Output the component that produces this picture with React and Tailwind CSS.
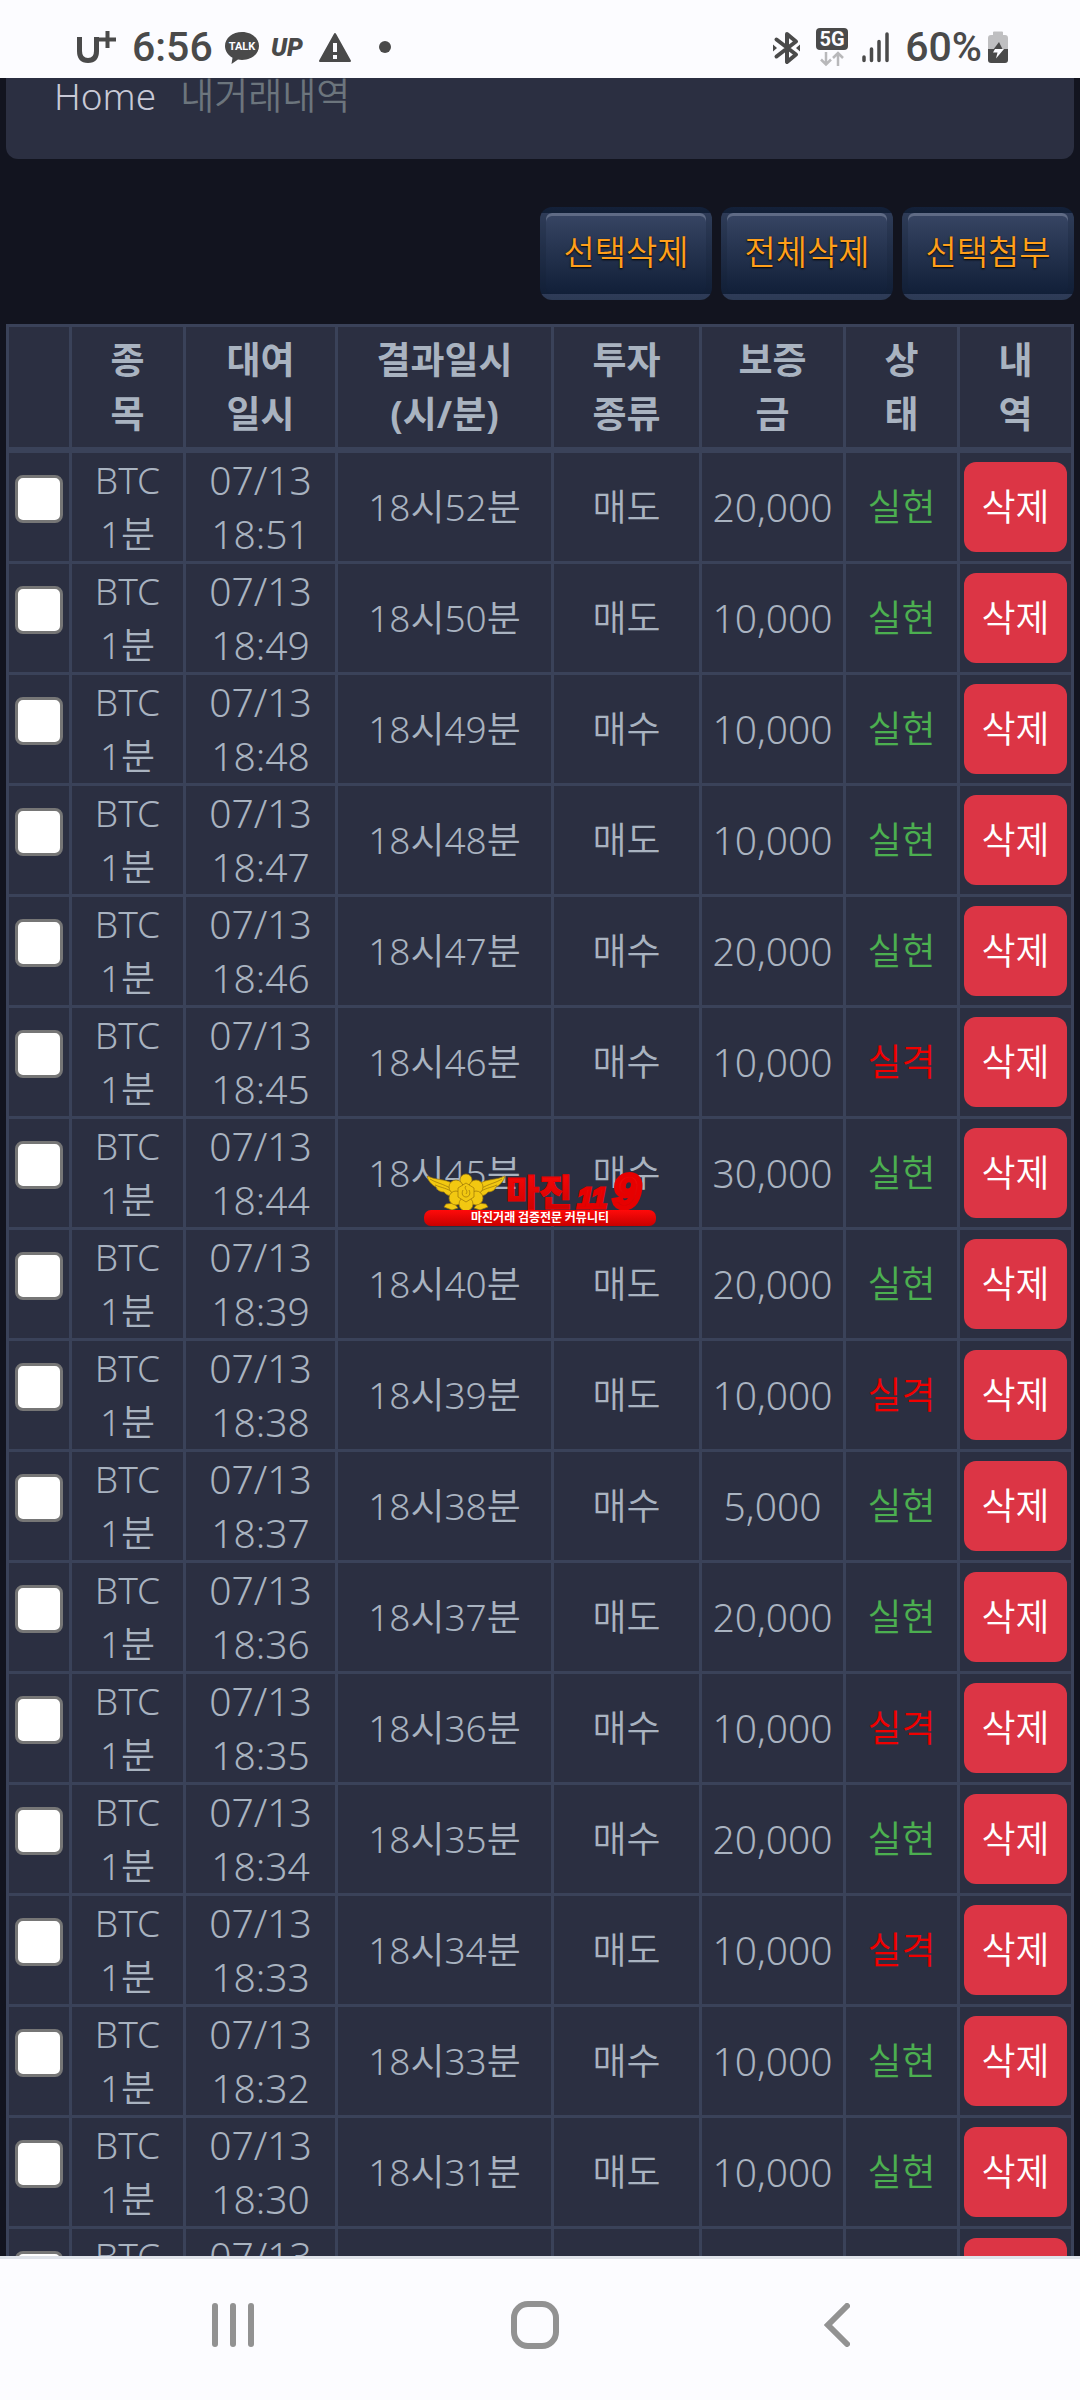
import React from 'react';

const row = (time, result, type, amount, ok) => ({ time, result, type, amount, ok });

const trades = [
  row('18:51', '18시52분', '매도', '20,000', true),
  row('18:49', '18시50분', '매도', '10,000', true),
  row('18:48', '18시49분', '매수', '10,000', true),
  row('18:47', '18시48분', '매도', '10,000', true),
  row('18:46', '18시47분', '매수', '20,000', true),
  row('18:45', '18시46분', '매수', '10,000', false),
  row('18:44', '18시45분', '매수', '30,000', true),
  row('18:39', '18시40분', '매도', '20,000', true),
  row('18:38', '18시39분', '매도', '10,000', false),
  row('18:37', '18시38분', '매수', '5,000', true),
  row('18:36', '18시37분', '매도', '20,000', true),
  row('18:35', '18시36분', '매수', '10,000', false),
  row('18:34', '18시35분', '매수', '20,000', true),
  row('18:33', '18시34분', '매도', '10,000', false),
  row('18:32', '18시33분', '매수', '10,000', true),
  row('18:30', '18시31분', '매도', '10,000', true),
  row('18:29', '18시30분', '매수', '10,000', true),
];

const headers = [
  ['종', '목'],
  ['대여', '일시'],
  ['결과일시', '(시/분)'],
  ['투자', '종류'],
  ['보증', '금'],
  ['상', '태'],
  ['내', '역'],
];

const cell = 'border-r-3 border-b-3 border-[#3a4259] p-0 text-center';
const numberCell = `${cell} text-[39px] leading-[54px]`;
const headCell = 'border-r-3 border-b-6 border-[#3a4259] px-0 py-1.5 text-center font-bold';

const StatusBar = () => (
  <header className="flex h-[78px] shrink-0 items-end justify-between bg-[#fcfcff] px-[72px] pb-[7px] font-[Roboto,sans-serif] text-[#4a4a4a]">
    <div className="flex items-center">
      <svg width="44" height="36" viewBox="0 0 44 36" fill="none" stroke="currentColor" aria-label="U+">
        <path d="M7.500 8v14c0 6.500 3 9.500 8.500 9.500s8.500-3 8.500-9.500V8" strokeWidth="5" />
        <path d="M27 10.500h17M35.500 2v17" strokeWidth="4" />
      </svg>
      <span className="ml-4 text-[41px] leading-12 font-medium">6:56</span>
      <svg className="ml-3" width="34" height="36" viewBox="0 0 34 36" role="img" aria-label="TALK">
        <path d="M17 3C7.600 3 0 9 0 17c0 5 3 9.300 7.500 11.700L6.500 35l6.500-4.500c1.300.3 2.600.4 4 .4 9.400 0 17-6 17-13.900S26.400 3 17 3z" fill="currentColor" />
        <text x="17" y="21" textAnchor="middle" fontSize="11" fontWeight="700" fill="#fcfcff" fontFamily="Roboto, sans-serif">TALK</text>
      </svg>
      <svg className="ml-3" width="36" height="36" viewBox="0 0 36 36" role="img" aria-label="UP">
        <text x="0" y="27" fontSize="25" fontWeight="900" fontStyle="italic" fill="currentColor" fontFamily="Roboto, sans-serif">UP</text>
      </svg>
      <svg className="ml-3" width="32" height="36" viewBox="0 0 32 36">
        <path d="M16 5L31 32H1z" fill="currentColor" stroke="currentColor" strokeWidth="2" strokeLinejoin="round" />
        <path d="M16 14v9M16 26v4" stroke="#fcfcff" strokeWidth="4" />
      </svg>
      <span className="ml-7 size-3 rounded-full bg-[#4a4a4a]" />
    </div>
    <div className="flex items-center">
      <svg width="27" height="36" viewBox="0 0 27 36" fill="none" stroke="currentColor" strokeWidth="4" strokeLinejoin="round" strokeLinecap="round">
        <path d="M3.500 10.500L23 25.500l-9 7.500V5l9 7.500L3.500 27.500" />
        <path d="M0 15.500l4 3.500-4 3.500zM27 15.500L23 19l4 3.500z" fill="currentColor" stroke="none" />
      </svg>
      <svg className="ml-4" width="32" height="40" viewBox="0 0 32 40" role="img" aria-label="5G">
        <rect y="1" width="32" height="22" rx="4" fill="currentColor" />
        <text x="16" y="19" textAnchor="middle" fontSize="20" fontWeight="700" fill="#fcfcff" fontFamily="Roboto, sans-serif">5G</text>
        <path d="M10 25v12M5 32.500l5 5 5-5M22 39V27M17 31l5-5 5 5" fill="none" stroke="#b8b8ba" strokeWidth="2.500" />
      </svg>
      <svg className="ml-3.5" width="27" height="36" viewBox="0 0 27 36" fill="none" stroke="currentColor" strokeWidth="3.500" strokeLinecap="round">
        <path d="M2 28v3.500M9.500 20v11.500M17 12.500v19M25 5v26.500" />
      </svg>
      <span className="ml-4 text-[41px] leading-12 font-medium">60%</span>
      <svg className="ml-1.5" width="20" height="36" viewBox="0 0 20 36">
        <path d="M5 6V3.500a1 1 0 0 1 1-1h8a1 1 0 0 1 1 1V6h2a3 3 0 0 1 3 3v12H0V9a3 3 0 0 1 3-3z" fill="#bfbfc1" />
        <path d="M0 20h20v11a3 3 0 0 1-3 3H3a3 3 0 0 1-3-3z" fill="currentColor" />
        <path d="M11 13l-6 8h5l1-1h3.500z" fill="currentColor" />
        <path d="M10 20h6L8 29.500l1.500-6H5L7 20z" fill="#fcfcff" />
      </svg>
    </div>
  </header>
);

const TradeRow = ({ trade }) => (
  <tr>
    <td className={cell}>
      <input
        type="checkbox"
        aria-label={`${trade.time} 선택`}
        className="mx-auto mb-4 block size-12 appearance-none rounded-lg border-3 border-[#767676] bg-white"
      />
    </td>
    <td className={cell}>BTC<br />1분</td>
    <td className={numberCell}>07/13<br />{trade.time}</td>
    <td className={cell}>{trade.result}</td>
    <td className={cell}>{trade.type}</td>
    <td className={numberCell}>{trade.amount}</td>
    <td className={`${cell} ${trade.ok ? 'text-[#4caf50]' : 'text-[#f00000]'}`}>{trade.ok ? '실현' : '실격'}</td>
    <td className="border-r-3 border-b-3 border-[#3a4259] px-1 py-0">
      <button type="button" className="h-[90px] w-full rounded-xl bg-[#dc3545] text-white">삭제</button>
    </td>
  </tr>
);

const Watermark = () => (
  <svg className="pointer-events-none absolute top-[1172px] left-1/2 -translate-x-1/2" width="232" height="54" viewBox="0 0 232 54" role="img" aria-label="마진119">
    <defs>
      <linearGradient id="wm-red" x1="0" y1="0" x2="0" y2="1">
        <stop offset="0" stopColor="#ff0a0a" />
        <stop offset="1" stopColor="#c80000" />
      </linearGradient>
    </defs>
    {/* eagle badge */}
    <g fill="#f2c811" stroke="#9a7408" strokeWidth="0.700">
      <path d="M22 32l8-1 4 5-6 2-8-3zM62 32l-8-1-4 5 6 2 8-3z" />
      <path d="M3 4c8 4 18 3 25 7 4 2 6 5 8 8l-6 5c-5 0-8-1-10-4-4 0-7-2-8-5-4-2-8-6-9-11z" />
      <path d="M81 4c-8 4-18 3-25 7-4 2-6 5-8 8l6 5c5 0 8-1 10-4 4 0 7-2 8-5 4-2 8-6 9-11z" />
      <path d="M6 7c8 5 16 5 26 13M11 13c7 3 12 3 19 8M78 7c-8 5-16 5-26 13M73 13c-7 3-12 3-19 8" fill="none" />
      <circle cx="42" cy="8" r="6" />
      <circle cx="32" cy="15" r="7" />
      <circle cx="52" cy="15" r="7" />
      <circle cx="32" cy="26" r="7" />
      <circle cx="52" cy="26" r="7" />
      <circle cx="42" cy="32" r="7" />
      <path d="M42 11l8 5v9l-8 5-8-5v-9z" />
      <path d="M42 14c-3 3 3 4 0 8M39 18c-2 4 0 7 3 7s5-3 3-7" fill="none" />
    </g>
    <g fill="url(#wm-red)">
      <text x="82" y="34" fontSize="36" fontWeight="900" fontFamily="'Noto Sans CJK KR', sans-serif" stroke="#e60000" strokeWidth="1">마진</text>
      <g fontFamily="'Liberation Sans', sans-serif" fontWeight="700" fontStyle="italic" stroke="#e60000" strokeWidth="3">
        <text x="153" y="36" fontSize="29">11</text>
        <text x="189" y="36" fontSize="49" strokeWidth="5">9</text>
      </g>
      <rect y="38" width="232" height="16" rx="7" />
    </g>
    <text x="116" y="50" textAnchor="middle" fontSize="12" fontWeight="700" fill="#fff" fontFamily="'Noto Sans CJK KR', sans-serif">마진거래 검증전문 커뮤니티</text>
  </svg>
);

const NavBar = () => (
  <footer className="grid h-[144px] shrink-0 grid-cols-3 items-center justify-items-center border-t-3 border-[#dfe3ea] bg-[#fcfcff] pr-[92px] pb-2.5 pl-[82px] text-[#929292]">
    <button type="button" aria-label="최근 앱" className="flex h-11 gap-3">
      <span className="h-full w-1.5 rounded-full bg-[#929292]" />
      <span className="h-full w-1.5 rounded-full bg-[#929292]" />
      <span className="h-full w-1.5 rounded-full bg-[#929292]" />
    </button>
    <button type="button" aria-label="홈" className="size-12 rounded-[17px] border-6 border-[#929292]" />
    <button type="button" aria-label="뒤로">
      <svg width="26" height="44" viewBox="0 0 26 44" fill="none" stroke="currentColor" strokeWidth="6" strokeLinecap="round">
        <path d="M23 3L4 22l19 19" />
      </svg>
    </button>
  </footer>
);

const App = () => {
  return (
    <div className="relative flex h-screen flex-col overflow-hidden bg-[#12141f] font-['Noto_Sans','Noto_Sans_CJK_KR',sans-serif] text-[37px] leading-[54px] font-[350] text-[#a9b3c0]">
      <StatusBar />
      <main className="min-h-0 flex-1 overflow-hidden px-1.5">
        <nav className="flex h-[81px] gap-6 rounded-b-xl bg-[#2b2f41] px-12 leading-9">
          <a href="#home" className="text-[#c8c9d6]">Home</a>
          <span className="text-[#6c757d]">내거래내역</span>
        </nav>
        <div className="mt-12 flex justify-end gap-[9px]">
          {['선택삭제', '전체삭제', '선택첨부'].map((label) => (
            <button
              key={label}
              type="button"
              className="h-[93px] w-[172px] rounded-xl border-6 border-[#12203440] bg-linear-to-b from-[#384664] to-[#111f38] pb-1 text-[34px] text-[#ff9f1a] shadow-[inset_0_3px_0_#5f6b85] text-shadow-[0_1px_2px_#000000]"
            >
              {label}
            </button>
          ))}
        </div>
        <table className="mt-6 w-full table-fixed border-separate border-spacing-0 border-t-3 border-l-3 border-[#3a4259] bg-[#2b2f41]">
          <colgroup>
            <col className="w-[63px]" />
            <col className="w-[114px]" />
            <col className="w-[152px]" />
            <col className="w-[216px]" />
            <col className="w-[148px]" />
            <col className="w-[144px]" />
            <col className="w-[114px]" />
            <col className="w-[114px]" />
          </colgroup>
          <thead>
            <tr>
              <td className={headCell}></td>
              {headers.map(([a, b]) => (
                <th key={a} className={headCell}>{a}<br />{b}</th>
              ))}
            </tr>
          </thead>
          <tbody>
            {trades.map((trade) => <TradeRow key={trade.time} trade={trade} />)}
          </tbody>
        </table>
      </main>
      <NavBar />
      <Watermark />
    </div>
  );
};

export default App;
